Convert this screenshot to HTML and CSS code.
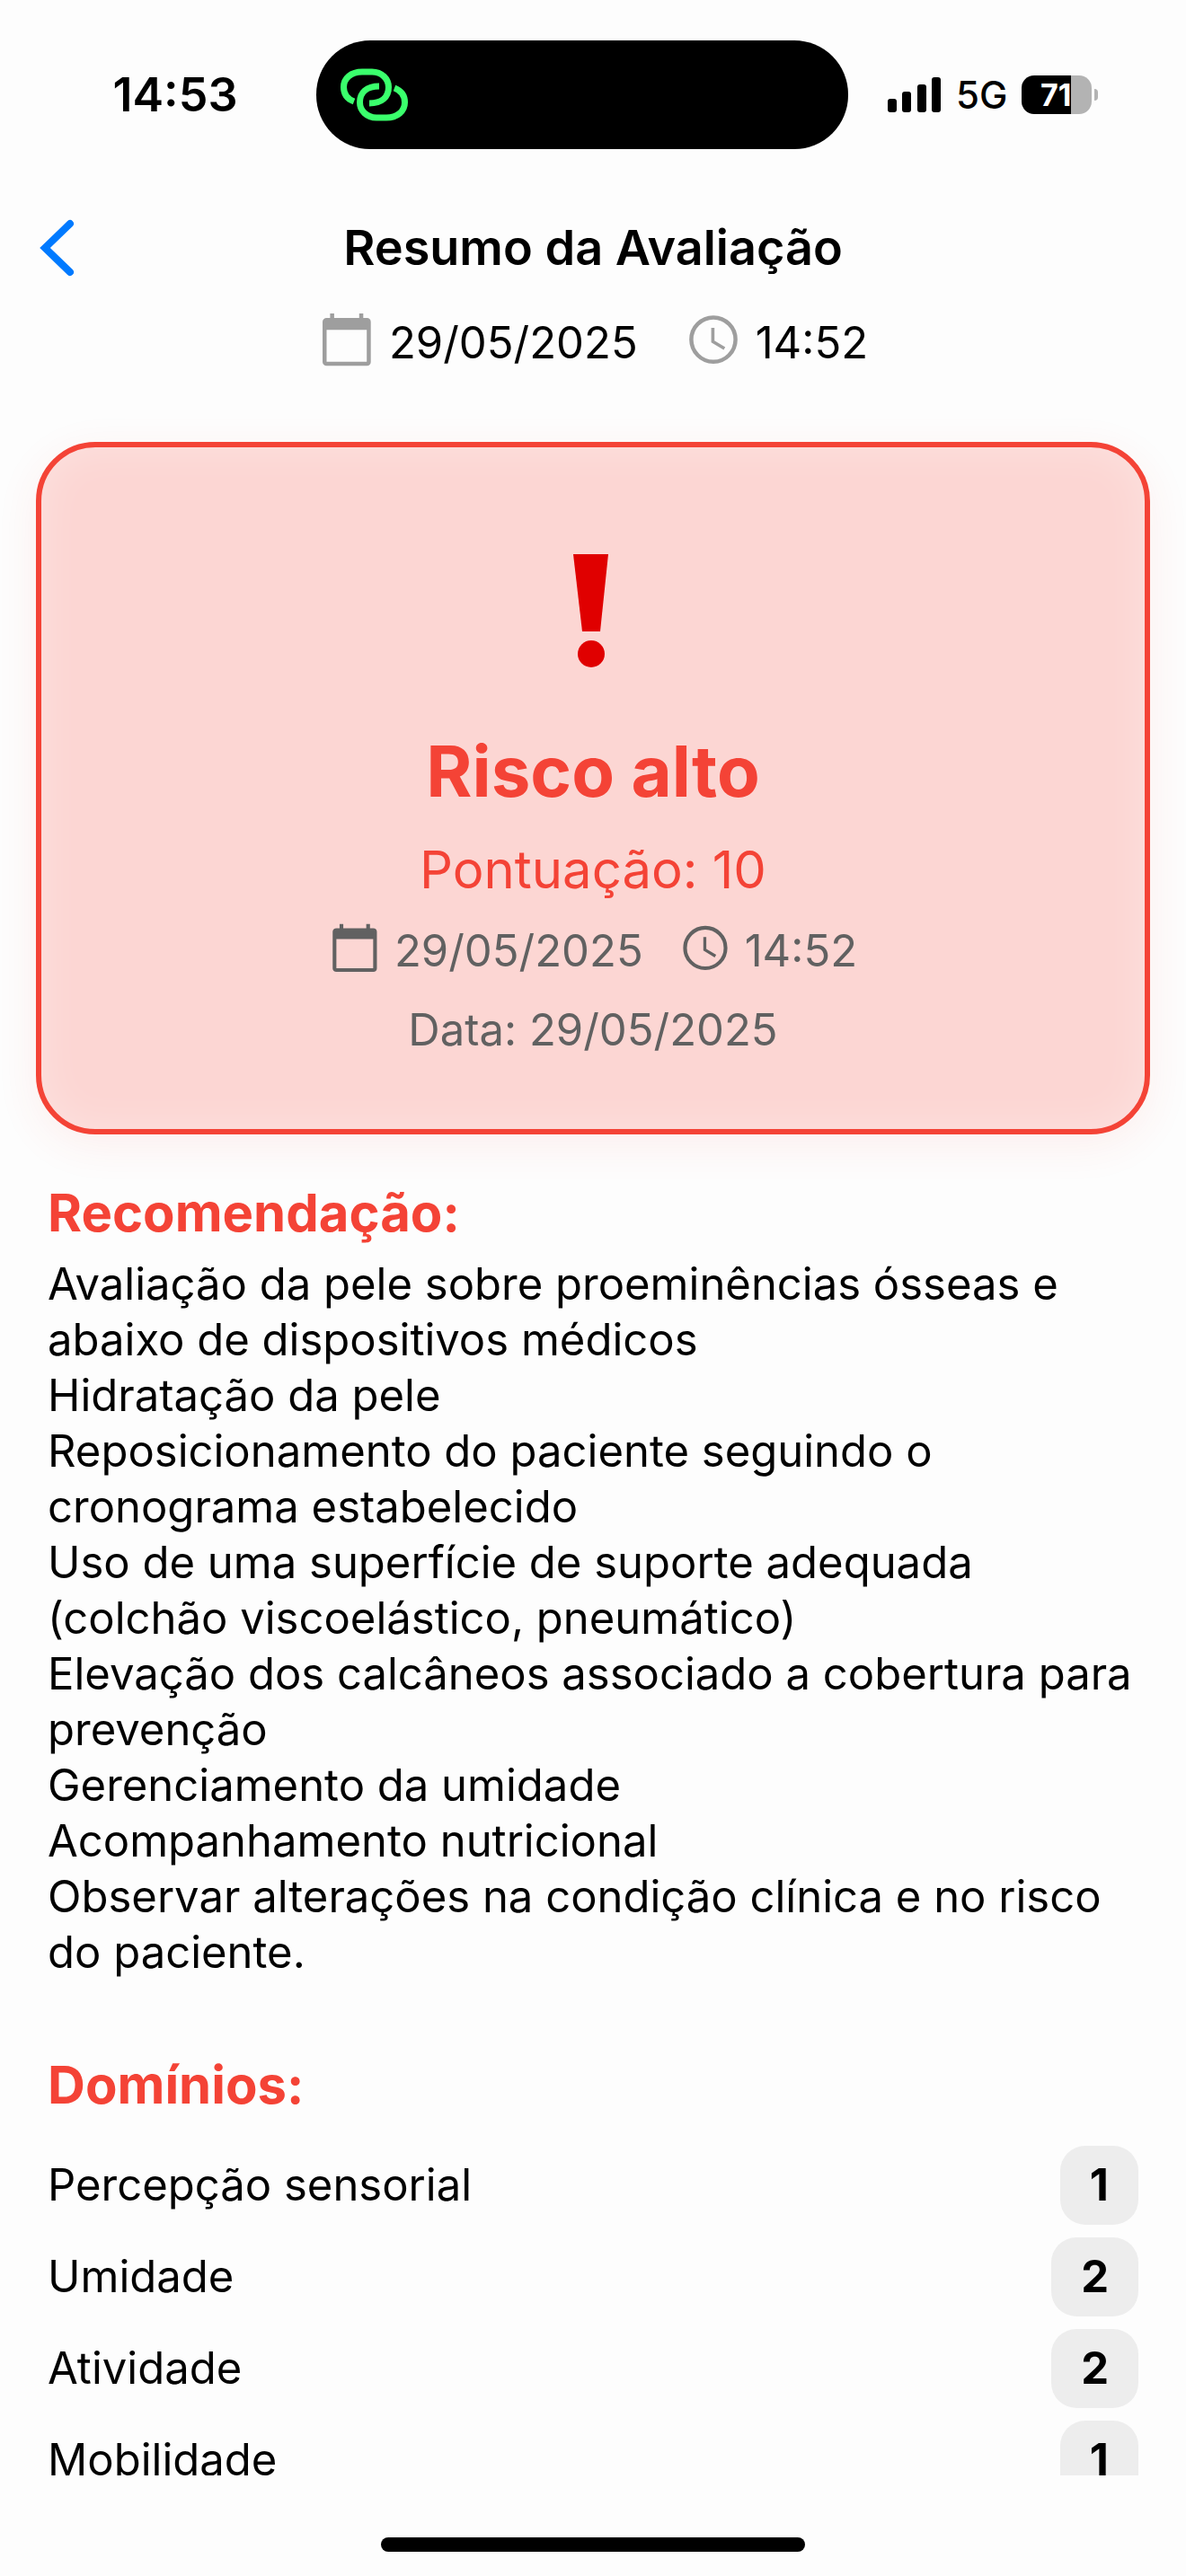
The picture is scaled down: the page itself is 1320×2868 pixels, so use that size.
FILE: index.html
```html
<!DOCTYPE html>
<html lang="pt-BR">
<head>
<meta charset="utf-8">
<meta name="viewport" content="width=device-width, initial-scale=1">
<title>Resumo da Avaliação</title>
<link rel="stylesheet" href="styles.css">
</head>
<body>
<svg class="sprite" aria-hidden="true">
  <symbol id="calendar" viewBox="0 0 24 24">
    <path fill-rule="evenodd" d="M5.800 1h1.500v1.700h9.300V1h1.500v1.700h1.400c.8 0 1.400.6 1.400 1.400v14.900c0 .8-.6 1.400-1.400 1.400h-15c-.8 0-1.500-.6-1.500-1.400v-14.900C3 3.300 3.700 2.700 4.500 2.700h1.300zM4.500 7.100v11.800h14.900v-11.800z"/>
  </symbol>
  <symbol id="clock" viewBox="0 0 24 24">
    <circle cx="12" cy="10.700" r="8.200" fill="none" stroke="currentColor" stroke-width="1.500"/>
    <path d="M11.800 6.300v5.100l4.300 2.600" fill="none" stroke="currentColor" stroke-width="1.200"/>
  </symbol>
</svg>

<div class="status">
  <time class="status-time">14:53</time>
  <div class="island">
    <svg class="link-icon" viewBox="0 0 76 60" aria-hidden="true">
      <g fill="none" stroke="#3aff6c" stroke-width="7">
        <path d="M15 37C7 34 3.500 28 3.500 21C3.500 11 12 4 24 4H35C46 4 53.500 12 53.500 21C53.500 32 46 39 32 39"/>
        <path d="M60 22C68 25 71.500 31 71.500 38C71.500 48 63 55 51 55H40C29 55 21.500 47 21.500 38C21.500 27 29 20 43 20"/>
      </g>
    </svg>
  </div>
  <div class="status-right">
    <svg class="signal" viewBox="0 0 60 40" aria-label="Sinal">
      <rect x="0" y="24" width="10" height="15" rx="3"/>
      <rect x="16" y="16" width="10" height="23" rx="3"/>
      <rect x="33" y="8" width="10" height="31" rx="3"/>
      <rect x="49" y="0" width="10" height="39" rx="3"/>
    </svg>
    <span class="network">5G</span>
    <span class="battery"><span class="battery-level">71</span></span>
  </div>
</div>

<header class="topbar">
  <button class="back" type="button" aria-label="Voltar">
    <svg viewBox="0 0 40 64" aria-hidden="true"><path d="M34 5 6 32 34 59" fill="none" stroke="currentColor" stroke-width="8" stroke-linecap="round"/></svg>
  </button>
  <h1>Resumo da Avaliação</h1>
</header>

<div class="meta meta-top">
  <span class="meta-item"><svg class="icon" aria-hidden="true"><use href="#calendar"/></svg><time>29/05/2025</time></span>
  <span class="meta-item"><svg class="icon" aria-hidden="true"><use href="#clock"/></svg><time>14:52</time></span>
</div>

<main class="scroll">
  <section class="risk">
    <svg class="risk-icon" viewBox="0 0 45 126" aria-hidden="true">
      <path d="M0 0H39L30 86H10Z"/><circle cx="20" cy="111" r="15"/>
    </svg>
    <h2>Risco alto</h2>
    <p class="score">Pontuação: 10</p>
    <div class="meta meta-card">
      <span class="meta-item"><svg class="icon" aria-hidden="true"><use href="#calendar"/></svg><time>29/05/2025</time></span>
      <span class="meta-item"><svg class="icon" aria-hidden="true"><use href="#clock"/></svg><time>14:52</time></span>
    </div>
    <p class="date">Data: 29/05/2025</p>
  </section>

  <section class="block">
    <h3>Recomendação:</h3>
    <ul class="advice">
      <li>Avaliação da pele sobre proeminências ósseas e abaixo de dispositivos médicos</li>
      <li>Hidratação da pele</li>
      <li>Reposicionamento do paciente seguindo o cronograma estabelecido</li>
      <li>Uso de uma superfície de suporte adequada (colchão viscoelástico, pneumático)</li>
      <li>Elevação dos calcâneos associado a cobertura para prevenção</li>
      <li>Gerenciamento da umidade</li>
      <li>Acompanhamento nutricional</li>
      <li>Observar alterações na condição clínica e no risco do paciente.</li>
    </ul>
  </section>

  <section class="block domains-block">
    <h3>Domínios:</h3>
    <dl class="domains">
      <div><dt>Percepção sensorial</dt><dd>1</dd></div>
      <div><dt>Umidade</dt><dd>2</dd></div>
      <div><dt>Atividade</dt><dd>2</dd></div>
      <div><dt>Mobilidade</dt><dd>1</dd></div>
    </dl>
  </section>
</main>

<footer class="home"><span class="home-bar"></span></footer>
</body>
</html>
```
FILE: styles.css
```css
* { box-sizing: border-box; margin: 0; padding: 0; }

body {
  display: flex;
  flex-direction: column;
  height: 100vh;
  background: #fdfdfd;
  color: #000;
  font-family: Inter, "Liberation Sans", sans-serif;
  font-size: 49px;
  line-height: 62px;
}

.sprite { position: absolute; width: 0; height: 0; }

/* status bar */
.status {
  display: grid;
  grid-template-columns: 1fr 592px 1fr;
  align-items: center;
  padding: 45px 24px 0 0;
}
.status-time {
  padding-left: 38px;
  text-align: center;
  font-size: 52px;
  font-weight: 600;
}
.island {
  display: flex;
  align-items: center;
  height: 121px;
  padding-left: 27px;
  border-radius: 60px;
  background: #000;
}
.link-icon { width: 76px; height: 60px; }
.status-right { display: flex; align-items: center; padding-left: 44px; }
.signal { width: 60px; height: 40px; }
.network { margin: 0 16px; font-size: 42px; font-weight: 500; }
.battery {
  position: relative;
  display: flex;
  width: 78px;
  height: 43px;
  border-radius: 14px;
  background: linear-gradient(90deg, #000 70%, #b3b3b3 70%);
}
.battery::after {
  content: "";
  position: absolute;
  right: -7px;
  top: 15px;
  width: 4px;
  height: 13px;
  border-radius: 0 4px 4px 0;
  background: #b3b3b3;
}
.battery-level {
  width: 55px;
  color: #fff;
  font-size: 34px;
  font-weight: 700;
  line-height: 43px;
  text-align: right;
}

/* title bar */
.topbar {
  display: grid;
  grid-template-columns: 100px 1fr 100px;
  align-items: center;
  height: 80px;
  margin-top: 70px;
}
.back {
  width: 40px;
  height: 64px;
  margin-left: 44px;
  border: 0;
  background: none;
  color: #007aff;
}
.back svg { display: block; width: 40px; height: 64px; }
h1 { font-size: 54px; font-weight: 600; text-align: center; }

/* date and time rows */
.meta { display: flex; justify-content: center; align-items: center; padding-right: 4px; }
.meta-item { display: flex; align-items: center; gap: 11px; }
.icon { fill: currentColor; }
.meta-top { height: 72px; margin-top: 30px; gap: 48px; }
.meta-top .icon { width: 72px; height: 72px; color: #9e9e9e; }
.meta-card { height: 66px; gap: 36px; color: #616161; }
.meta-card .icon { width: 66px; height: 66px; }

.scroll { flex: 1; min-height: 0; overflow: hidden; padding-top: 74px; }

/* risk card */
.risk {
  display: flex;
  flex-direction: column;
  align-items: center;
  margin: 0 40px;
  padding: 119px 24px 79px;
  border: 6px solid #f44336;
  border-radius: 66px;
  background: #fcd6d3;
  box-shadow: inset 0 0 48px rgba(255, 255, 255, .3), 0 12px 48px rgba(244, 67, 54, .08);
}
.risk-icon { width: 45px; height: 126px; fill: #e00000; }
h2 { margin-top: 66px; color: #f44336; font-size: 78px; font-weight: 700; line-height: 100px; }
.score { margin: 24px 0 23px; color: #f44336; font-size: 58px; line-height: 70px; }
.date { margin-top: 24px; color: #616161; }

/* text sections */
.block { margin: 47px 53px 0; }
h3 { margin-bottom: 9px; color: #f44336; font-size: 58px; font-weight: 700; line-height: 80px; }
.advice { list-style: none; }
.domains-block { margin-top: 76px; }
.domains { display: grid; gap: 14px; margin-top: 28px; }
.domains div { display: flex; justify-content: space-between; align-items: center; }
.domains dd {
  padding: 13px 33px;
  border-radius: 28px;
  background: #ededed;
  font-weight: 700;
}

/* home indicator */
.home { display: flex; justify-content: center; height: 112px; padding-top: 69px; }
.home-bar { width: 472px; height: 16px; border-radius: 8px; background: #000; }
```
